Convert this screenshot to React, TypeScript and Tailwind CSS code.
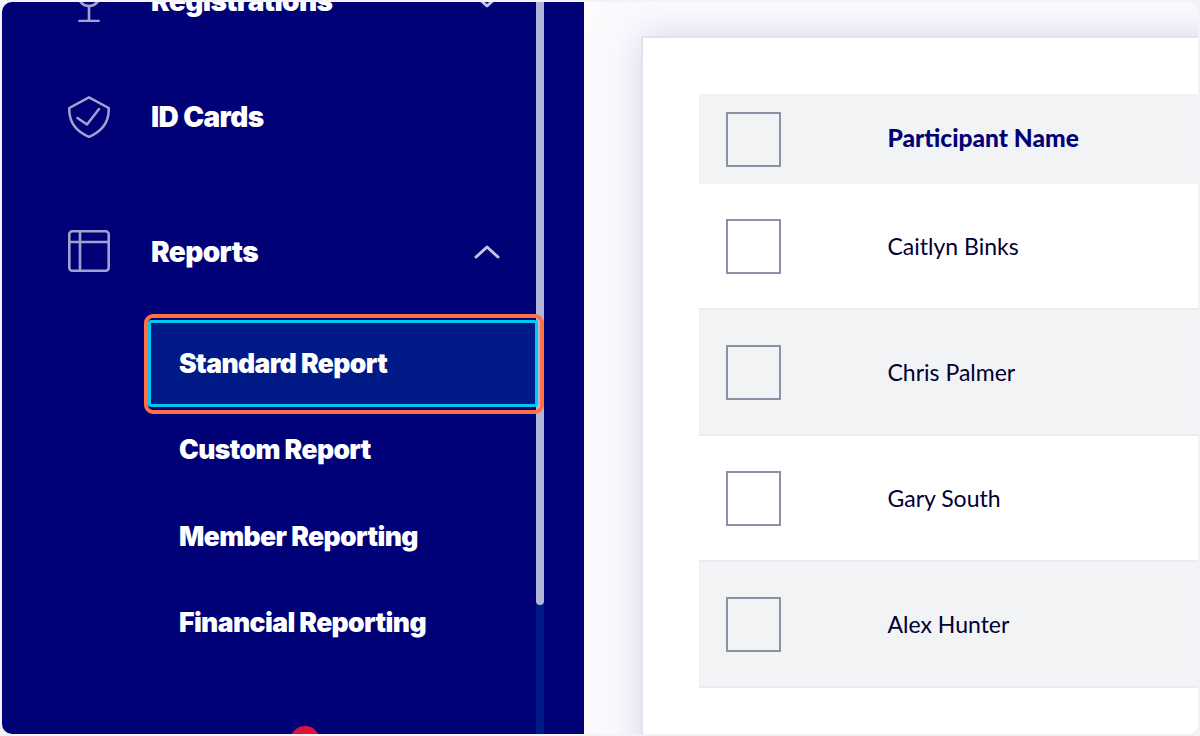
const participants = [
  { name: "Caitlyn Binks", shaded: false },
  { name: "Chris Palmer", shaded: true },
  { name: "Gary South", shaded: false },
  { name: "Alex Hunter", shaded: true },
];

const subItems = ["Custom Report", "Member Reporting", "Financial Reporting"];

function GlassIcon() {
  return (
    <svg width="42" height="42" viewBox="0 0 42 42" fill="none" stroke="#a0a3cf" strokeWidth="2.600" strokeLinecap="round">
      <path d="M10 14c1 8 5 12 11 12s10-4 11-12" />
      <path d="M21 26v15" />
      <path d="M11.500 41h19" />
    </svg>
  );
}

function ShieldIcon() {
  return (
    <svg width="42" height="42" viewBox="0 0 42 42" fill="none" stroke="#a0a3cf" strokeWidth="2.500" strokeLinecap="round" strokeLinejoin="round">
      <path d="M21 1.300 40.700 12c.5 13-6 23-19.700 28.800C7.300 35 .8 25 1.300 12Z" />
      <path d="m9.500 22 9.500 6.500L31 13" />
    </svg>
  );
}

function TableIcon() {
  return (
    <svg width="42" height="42" viewBox="0 0 42 42" fill="none" stroke="#a0a3cf" strokeWidth="2.600" strokeLinejoin="round">
      <rect x="1.300" y="1.300" width="39.400" height="39.400" rx="3" />
      <path d="M1 12h40" />
      <path d="M12 1v40" />
    </svg>
  );
}

function Chevron({ up }: { up?: boolean }) {
  return (
    <svg width="26" height="14" viewBox="0 0 26 14" fill="none" stroke="#c3c5e2" strokeWidth="3" strokeLinecap="round" strokeLinejoin="round">
      <path d={up ? "M2 12 13 2l11 10" : "M2 2l11 10L24 2"} />
    </svg>
  );
}

function Checkbox() {
  return <div className="h-[55px] w-[55px] shrink-0 border-2 border-[#8f90a5]" />;
}

export default function App() {
  return (
    <div className="h-[736px] w-[1200px] overflow-hidden bg-[#f4f2f7] p-[2px] font-['Lato',sans-serif]">
      <div className="flex h-[732px] overflow-hidden rounded-[10px]">
        <aside className="flex h-full w-[582px] shrink-0 overflow-hidden bg-[#000077]">
          <nav className="relative -mt-[50px] w-[534px] shrink-0 font-['Inter',sans-serif] text-[26.500px] leading-none font-black tracking-[-0.6px] text-white">
            <div className="flex h-[97.500px] items-center pl-[66px] pr-[36px]">
              <GlassIcon />
              <span className="ml-[41px] flex-1 text-[28px]">Registrations</span>
              <Chevron />
            </div>
            <div className="flex h-[135px] items-center pl-[66px] pr-[36px]">
              <ShieldIcon />
              <span className="ml-[41px] flex-1 text-[28px]">ID Cards</span>
            </div>
            <div className="flex h-[135px] items-center pl-[66px] pr-[36px]">
              <div className="-mt-[2px]">
                <TableIcon />
              </div>
              <span className="ml-[41px] flex-1 text-[28px]">Reports</span>
              <Chevron up />
            </div>
            <div className="relative ml-[146px] flex h-[87px] w-[390px] items-center rounded-[3px] border-[3px] border-[#00c8f0] bg-[#001a88] pl-[28px]">
              Standard Report
              <div className="absolute -top-[9px] -right-[8.500px] -bottom-[10px] -left-[7.500px] rounded-[9px] border-4 border-[#ff7043]" />
            </div>
            {subItems.map((item) => (
              <div key={item} className="ml-[177px] flex h-[86.300px] items-center">
                {item}
              </div>
            ))}
            <div className="absolute left-[288px] top-[774px] h-[30px] w-[30px] rounded-full bg-[#dc143c]" />
          </nav>
          <div className="flex h-full w-[8px] shrink-0 flex-col bg-[#001a88]">
            <div className="h-[603px] rounded-b-full bg-[#b0b5d9]" />
          </div>
        </aside>
        <main className="min-w-0 flex-1 bg-[#fbfbfe] pl-[57px] pt-[34px]">
          <div className="h-[720px] w-[600px] border-2 border-r-0 border-[#e2e2ea] bg-white pl-[56px] pt-[56px] text-[23px] text-[#000033] shadow-[0_0_38px_rgba(180,180,225,0.55)]">
            <div className="flex h-[90px] items-center bg-[#f2f3f5] pl-[27px]">
              <Checkbox />
              <span className="-mt-[2px] ml-[106.500px] text-[24.500px] font-black text-[#000077]">Participant Name</span>
            </div>
            {participants.map((p) => (
              <div
                key={p.name}
                className={`flex h-[126px] items-center border-b-2 border-[#ebebef] pl-[27px] ${p.shaded ? "bg-[#f2f3f5]" : "bg-white"}`}
              >
                <Checkbox />
                <span className="ml-[106.500px]">{p.name}</span>
              </div>
            ))}
          </div>
        </main>
      </div>
    </div>
  );
}
